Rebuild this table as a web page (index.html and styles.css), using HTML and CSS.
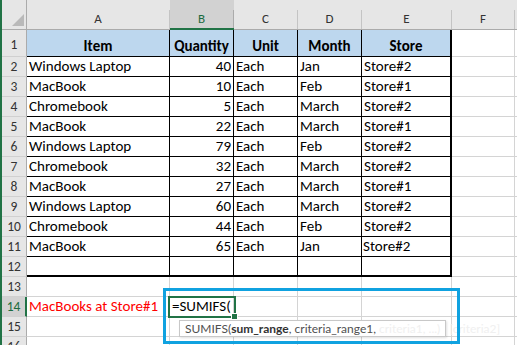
FILE: index.html
```html
<!DOCTYPE html>
<html>
<head>
<meta charset="utf-8">
<link rel="stylesheet" href="styles.css">
</head>
<body>
<div class="sheet">
  <div class="grid">
    <!-- column headers -->
    <div class="corner"><span class="tri"></span></div>
    <div class="ch"><span>A</span></div>
    <div class="ch sel"><span>B</span></div>
    <div class="ch"><span>C</span></div>
    <div class="ch"><span>D</span></div>
    <div class="ch"><span>E</span></div>
    <div class="ch"><span>F</span></div>
    <div class="ch last"><span></span></div>

    <!-- row 1 -->
    <div class="rh">1</div>
    <div class="c t h">Item</div>
    <div class="c t h">Quantity</div>
    <div class="c t h">Unit</div>
    <div class="c t h">Month</div>
    <div class="c t te h">Store</div>
    <div class="c"></div><div class="c"></div>

    <div class="rh">2</div>
    <div class="c t">Windows Laptop</div><div class="c t n">40</div><div class="c t">Each</div><div class="c t">Jan</div><div class="c t te">Store#2</div><div class="c"></div><div class="c"></div>
    <div class="rh">3</div>
    <div class="c t">MacBook</div><div class="c t n">10</div><div class="c t">Each</div><div class="c t">Feb</div><div class="c t te">Store#1</div><div class="c"></div><div class="c"></div>
    <div class="rh">4</div>
    <div class="c t">Chromebook</div><div class="c t n">5</div><div class="c t">Each</div><div class="c t">March</div><div class="c t te">Store#2</div><div class="c"></div><div class="c"></div>
    <div class="rh">5</div>
    <div class="c t">MacBook</div><div class="c t n">22</div><div class="c t">Each</div><div class="c t">March</div><div class="c t te">Store#1</div><div class="c"></div><div class="c"></div>
    <div class="rh">6</div>
    <div class="c t">Windows Laptop</div><div class="c t n">79</div><div class="c t">Each</div><div class="c t">Feb</div><div class="c t te">Store#2</div><div class="c"></div><div class="c"></div>
    <div class="rh">7</div>
    <div class="c t">Chromebook</div><div class="c t n">32</div><div class="c t">Each</div><div class="c t">March</div><div class="c t te">Store#2</div><div class="c"></div><div class="c"></div>
    <div class="rh">8</div>
    <div class="c t">MacBook</div><div class="c t n">27</div><div class="c t">Each</div><div class="c t">March</div><div class="c t te">Store#1</div><div class="c"></div><div class="c"></div>
    <div class="rh">9</div>
    <div class="c t">Windows Laptop</div><div class="c t n">60</div><div class="c t">Each</div><div class="c t">March</div><div class="c t te">Store#2</div><div class="c"></div><div class="c"></div>
    <div class="rh">10</div>
    <div class="c t">Chromebook</div><div class="c t n">44</div><div class="c t">Each</div><div class="c t">Feb</div><div class="c t te">Store#2</div><div class="c"></div><div class="c"></div>
    <div class="rh">11</div>
    <div class="c t">MacBook</div><div class="c t n">65</div><div class="c t">Each</div><div class="c t">Jan</div><div class="c t te shift">Store#2</div><div class="c"></div><div class="c"></div>
    <div class="rh">12</div>
    <div class="c t tb"></div><div class="c t tb"></div><div class="c t tb"></div><div class="c t tb"></div><div class="c t te tb"></div><div class="c"></div><div class="c"></div>
    <div class="rh">13</div>
    <div class="c"></div><div class="c"></div><div class="c"></div><div class="c"></div><div class="c"></div><div class="c"></div><div class="c"></div>
    <div class="rh rsel">14</div>
    <div class="c red">MacBooks at Store#1</div><div class="c"><span class="formula">=SUMIFS(</span><span class="caret"></span></div><div class="c"></div><div class="c"></div><div class="c"></div><div class="c"></div><div class="c"></div>
    <div class="rh">15</div>
    <div class="c"></div><div class="c"></div><div class="c"></div><div class="c"></div><div class="c"></div><div class="c"></div><div class="c"></div>
    <div class="rh">16</div>
    <div class="c"></div><div class="c"></div><div class="c"></div><div class="c"></div><div class="c"></div><div class="c"></div><div class="c"></div>
  </div>

  <div class="active"><span class="handle"></span></div>
  <div class="tip">SUMIFS(<b>sum_range</b>, criteria_range1, <span class="fade">criteria1, ...)&nbsp;&nbsp;&nbsp;[criteria2]</span></div>
  <div class="callout"></div>
</div>
</body>
</html>
```
FILE: styles.css
```css
html, body {
  margin: 0;
  padding: 0;
  background: #ffffff;
  overflow: hidden;
}

.sheet {
  position: relative;
  width: 517px;
  height: 345px;
  overflow: hidden;
  font-family: Carlito, Lato, "Liberation Sans", sans-serif;
  font-size: 15px;
  color: #000;
}

.grid {
  display: grid;
  border-left: 2px solid #217346;
  grid-template-columns: 25px 143px 64px 64px 64px 90px 63px 1fr;
  grid-template-rows: 30px 27px repeat(14, 20px);
}

.grid > div {
  box-sizing: border-box;
  min-width: 0;
  overflow: visible;
  white-space: nowrap;
}

/* corner */
.corner {
  background: #e6e6e6;
  border-right: 1px solid #ababab;
  border-bottom: 1px solid #ababab;
  position: relative;
}
.tri {
  position: absolute;
  right: 2px;
  bottom: 3px;
  width: 0;
  height: 0;
  border-left: 12px solid transparent;
  border-bottom: 12px solid #b9b9b9;
}

/* column headers */
.ch {
  background: #e6e6e6;
  border-bottom: 1px solid #ababab;
  display: flex;
  padding-top: 10px;
}
.ch span {
  flex: 1;
  border-right: 1px solid #c4c4c4;
  text-align: center;
  line-height: 18px;
  font-size: 13px;
  color: #333;
}
.ch.sel {
  background: #d2d2d2;
  border-bottom: 2px solid #217346;
}
.ch.sel span {
  color: #1d6b40;
  border-right-color: #ababab;
}
.ch.last span { border-right: none; }

/* row headers */
.rh {
  background: #e6e6e6;
  border-right: 1px solid #ababab;
  border-bottom: 1px solid #d0d0d0;
  text-align: center;
  font-size: 13.5px;
  line-height: 19px;
  color: #333;
}
.grid > .rh:nth-child(9) { line-height: 30px; }
.rh.rsel {
  background: #d2d2d2;
  border-right: 2px solid #217346;
  color: #1d6b40;
}

/* cells */
.c {
  border-right: 1px solid #d4d4d4;
  border-bottom: 1px solid #d4d4d4;
  display: flex;
  align-items: flex-end;
  line-height: 19px;
  padding: 0 2px;
}
.c.t {
  border-right-color: #000;
  border-bottom-color: #000;
}
.c.te {
  border-right: 2px solid #000;
}
.c.tb {
  border-bottom: 2px solid #000;
}
.c.h {
  background: #bdd7ee;
  font-weight: bold;
  justify-content: center;
  border-bottom-color: #000;
}
.c.n {
  justify-content: flex-end;
}
.c.shift { padding-left: 1px; }
.c.red { color: #ff0000; }

.formula { position: relative; }
.caret {
  display: inline-block;
  width: 1px;
  height: 16px;
  background: #000;
  margin-left: 1px;
  margin-bottom: 2px;
}

/* overlays */
.active {
  position: absolute;
  left: 168px;
  top: 296px;
  width: 68px;
  height: 22px;
  box-sizing: border-box;
  border: 2px solid #217346;
}
.handle {
  position: absolute;
  right: -4px;
  bottom: -4px;
  width: 5px;
  height: 5px;
  background: #217346;
  border: 1px solid #fff;
}

.tip {
  position: absolute;
  left: 179px;
  top: 320px;
  width: 267px;
  height: 17px;
  box-sizing: border-box;
  background: #fff;
  border: 1px solid #c8c8c8;
  box-shadow: 1px 1px 2px rgba(0,0,0,0.12);
  font-family: Lato, "Open Sans", sans-serif;
  font-size: 12px;
  line-height: 15px;
  padding-left: 5px;
  color: #505050;
  white-space: nowrap;
  overflow: visible;
}
.tip b {
  color: #333;
  font-weight: bold;
}
.tip .fade {
  color: #f0f0f0;
}

.callout {
  position: absolute;
  left: 163px;
  top: 288px;
  width: 297px;
  height: 56px;
  box-sizing: border-box;
  border: 3px solid #10a2e0;
}
```
